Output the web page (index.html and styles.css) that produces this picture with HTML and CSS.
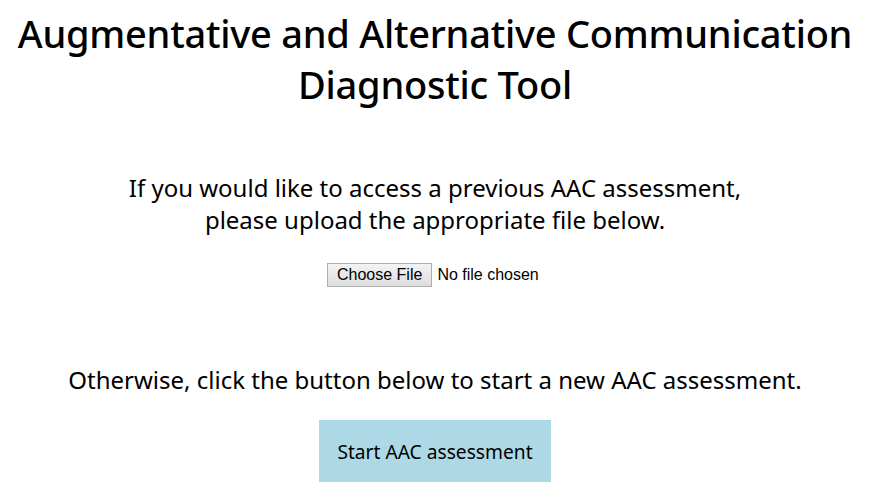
FILE: index.html
```html
<!DOCTYPE html>
<html lang="en">
<head>
<meta charset="utf-8">
<title>AAC Diagnostic Tool</title>
<link rel="stylesheet" href="styles.css">
</head>
<body>
<main class="page">
  <h1 class="title">Augmentative and Alternative Communication Diagnostic Tool</h1>
  <section class="upload">
    <p class="lead">If you would like to access a previous AAC assessment,<br>please upload the appropriate file below.</p>
    <input class="file" type="file">
  </section>
  <section class="start">
    <p class="lead">Otherwise, click the button below to start a new AAC assessment.</p>
    <button class="start-btn" type="button">Start AAC assessment</button>
  </section>
</main>
</body>
</html>
```
FILE: styles.css
```css
html, body {
  margin: 0;
  padding: 0;
  background: #ffffff;
}
body {
  font-family: "Noto Sans", "Open Sans", sans-serif;
  color: #000;
}
.page {
  display: flex;
  flex-direction: column;
  align-items: center;
  text-align: center;
  padding: 8px 15px 0 8px;
}
.title {
  margin: 0;
  font-size: 38px;
  font-weight: 500;
  line-height: 51px;
  letter-spacing: -0.25px;
}
.upload {
  display: flex;
  flex-direction: column;
  align-items: center;
  margin-top: 62px;
}
.lead {
  margin: 0;
  font-size: 24px;
  line-height: 32px;
}
.file {
  margin-top: 27px;
  width: 240px;
  margin-left: 24px;
  text-align: left;
  font-family: "Liberation Sans", Arial, sans-serif;
  font-size: 16px;
  color: #000;
}
.file::file-selector-button {
  height: 24px;
  margin-right: 5px;
  padding: 0 9px;
  border: 1px solid #adadad;
  border-radius: 0;
  background: linear-gradient(#f3f3f3, #dddddd);
  font-family: "Liberation Sans", Arial, sans-serif;
  font-size: 16px;
  color: #000;
}
.start {
  display: flex;
  flex-direction: column;
  align-items: center;
  margin-top: 77px;
}
.start-btn {
  margin-top: 24px;
  width: 232px;
  height: 62px;
  border: none;
  background: #add8e6;
  font-family: "Noto Sans", "Open Sans", sans-serif;
  font-size: 19.2px;
  color: #000;
}
```
